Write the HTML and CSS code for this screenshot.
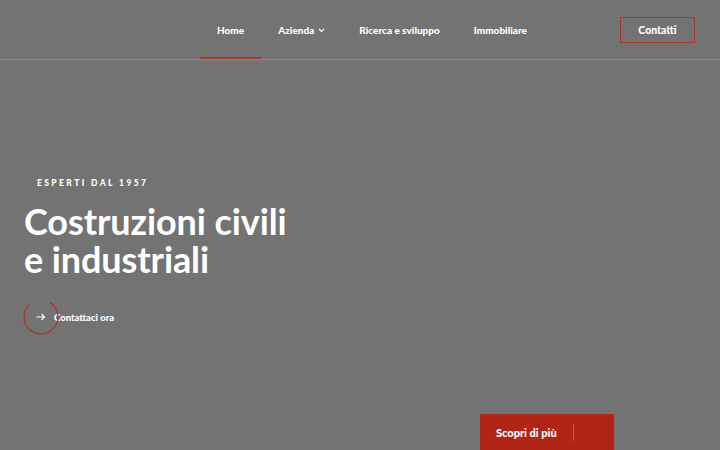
FILE: index.html
```html
<!DOCTYPE html>
<html lang="it">
<head>
<meta charset="utf-8">
<title>Costruzioni civili e industriali</title>
<link rel="stylesheet" href="styles.css">
</head>
<body>
<header class="header">
  <nav class="nav">
    <a class="nav-item active" href="#">Home</a>
    <a class="nav-item" href="#">Azienda <svg class="chev" width="7" height="5" viewBox="0 0 7 5"><path d="M1 1l2.5 2.5L6 1" fill="none" stroke="#fff" stroke-width="1.1"/></svg></a>
    <a class="nav-item" href="#">Ricerca e sviluppo</a>
    <a class="nav-item" href="#">Immobiliare</a>
  </nav>
  <a class="btn-contact" href="#">Contatti</a>
</header>
<main class="hero">
  <div class="hero-text">
    <p class="eyebrow">ESPERTI DAL 1957</p>
    <h1 class="title"><span class="line">Costruzioni civili</span><span class="line">e industriali</span></h1>
    <a class="cta" href="#">
      <span class="cta-icon">
        <svg class="ring" width="38" height="38" viewBox="0 0 38 38"><circle cx="19" cy="19" r="17" fill="none" stroke="#a33a2e" stroke-width="1.3" stroke-dasharray="84 23" transform="rotate(-58 19 19)" /></svg>
        <svg class="arrow" width="10" height="8" viewBox="0 0 10 8"><path d="M0.5 4h8M5.5 1l3 3-3 3" fill="none" stroke="#fff" stroke-width="1.1"/></svg>
      </span>
      <span class="cta-label">Contattaci ora</span>
    </a>
  </div>
  <div class="bottom">
    <a class="btn-more" href="#"><span>Scopri di più</span><span class="sep"></span></a>
  </div>
</main>
</body>
</html>
```
FILE: styles.css
```css
* { box-sizing: border-box; }
html, body { margin: 0; padding: 0; }
body {
  width: 720px;
  height: 450px;
  overflow: hidden;
  background: #737373;
  color: #fff;
  font-family: "Lato", "Liberation Sans", sans-serif;
}
a { color: #fff; text-decoration: none; }
.header {
  height: 60px;
  border-bottom: 1px solid #888888;
  display: flex;
  align-items: center;
  padding: 0 25px 0 200px;
}
.nav {
  display: flex;
  height: 59px;
  align-items: stretch;
}
.nav-item {
  display: flex;
  align-items: center;
  gap: 4px;
  padding: 0 17px;
  font-size: 10px;
  font-weight: 900;
  position: relative;
}
.nav-item.active::after {
  content: "";
  position: absolute;
  left: 0; right: 0; bottom: 0;
  height: 2px;
  background: #a8382c;
}
.chev { margin-top: 1px; }
.btn-contact {
  margin-left: auto;
  width: 75px;
  height: 26px;
  border: 1.5px solid #a8382c;
  display: flex;
  align-items: center;
  justify-content: center;
  font-size: 10.5px;
  font-weight: 900;
}
.hero {
  height: 390px;
  display: flex;
  flex-direction: column;
}
.hero-text { padding: 118px 0 0 24px; }
.eyebrow {
  margin: 0 0 14px 13px;
  font-size: 8.5px;
  font-weight: 900;
  letter-spacing: 2.4px;
}
.title {
  margin: 0;
  display: flex;
  flex-direction: column;
  font-size: 36px;
  line-height: 38px;
  font-weight: 700;
  letter-spacing: -0.1px;
}
.cta {
  margin-top: 20px;
  display: flex;
  align-items: center;
}
.cta-icon {
  position: relative;
  width: 38px;
  height: 38px;
  display: flex;
  align-items: center;
  justify-content: center;
  margin-left: -2px;
}
.ring { position: absolute; left: 0; top: 0; }
.cta-label { font-size: 9.5px; font-weight: 900; margin-left: -6px; }
.bottom {
  margin-top: auto;
  padding-left: 480px;
}
.btn-more {
  width: 134px;
  height: 36px;
  background: #b02515;
  display: flex;
  align-items: center;
  padding-left: 16px;
  font-size: 11px;
  font-weight: 900;
}
.sep {
  width: 1px;
  height: 17px;
  background: #d4594c;
  margin-left: 16px;
}
```
